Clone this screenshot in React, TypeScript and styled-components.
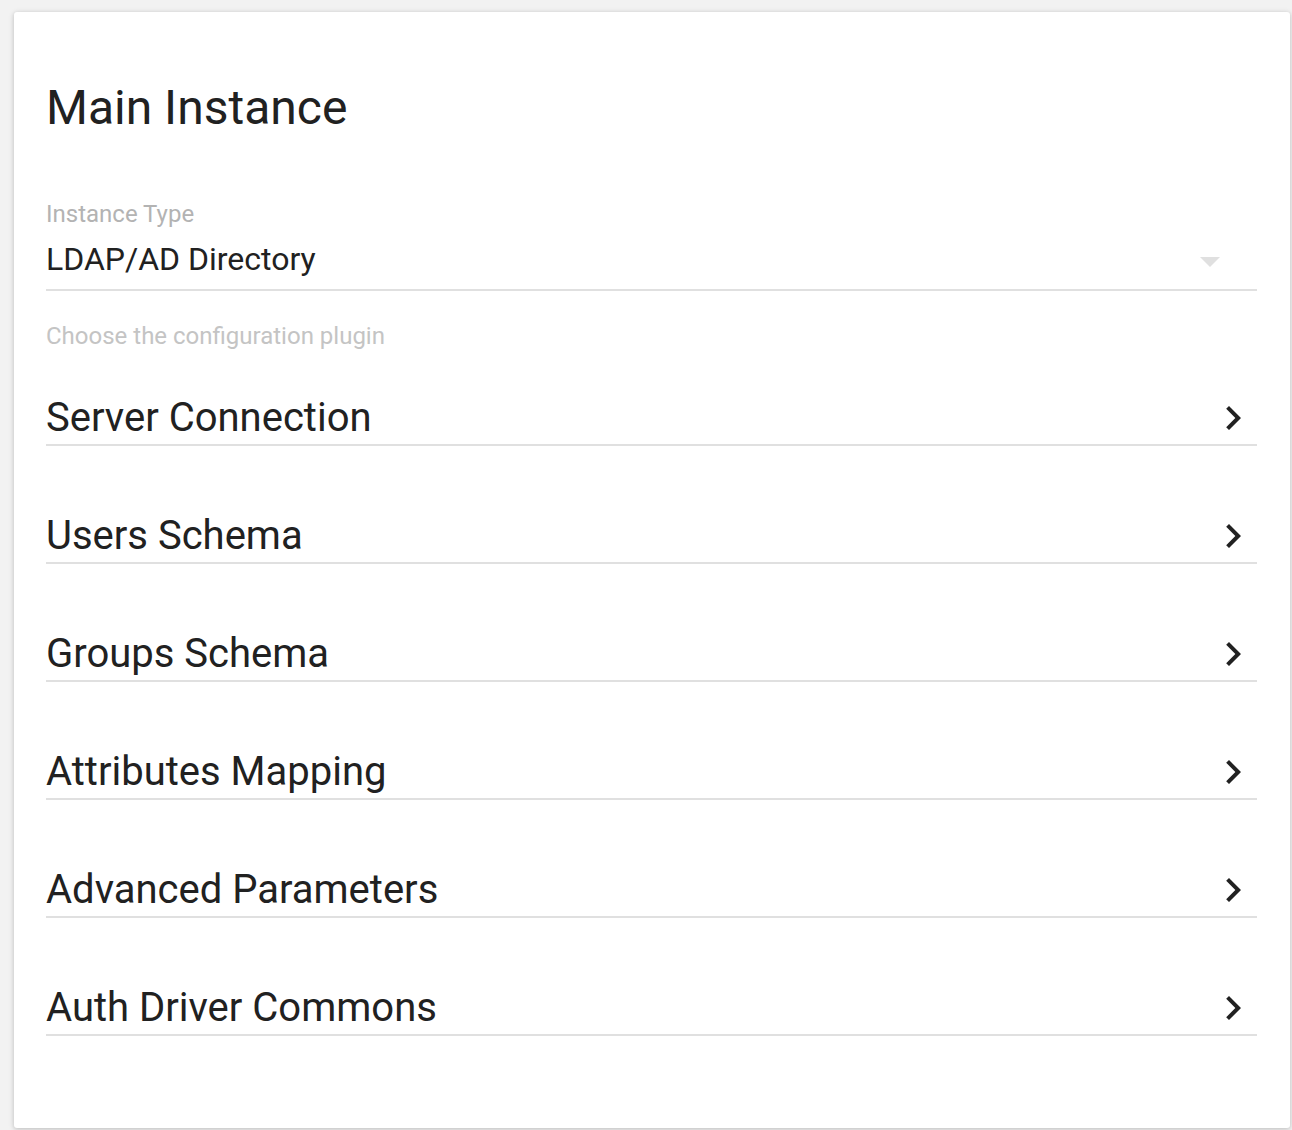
import React from "react";
import styled, { createGlobalStyle } from "styled-components";

const GlobalStyle = createGlobalStyle`
  html, body {
    margin: 0;
    padding: 0;
    background: #f2f2f2;
  }
  body {
    font-family: Roboto, "Liberation Sans", Arial, sans-serif;
    -webkit-font-smoothing: antialiased;
  }
`;

const Page = styled.div`
  padding: 12px 2px 2px 14px;
  min-height: 1130px;
  box-sizing: border-box;
`;

const Card = styled.section`
  background: #ffffff;
  border-radius: 3px;
  box-shadow: 0 1px 6px rgba(0, 0, 0, 0.12), 0 1px 4px rgba(0, 0, 0, 0.12);
  padding: 68px 33px 92px 32px;
  box-sizing: border-box;
  height: 1116px;
`;

const Title = styled.h1`
  margin: 0;
  font-size: 48px;
  line-height: 56px;
  font-weight: 400;
  color: #212121;
`;

const Field = styled.div`
  margin-top: 62px;
`;

const FieldLabel = styled.div`
  font-size: 24px;
  line-height: 32px;
  color: #b3b3b3;
`;

const SelectRow = styled.div`
  margin-top: 9px;
  display: flex;
  align-items: center;
  justify-content: space-between;
  padding-bottom: 10px;
  border-bottom: 2px solid #e0e0e0;
  height: 40px;
`;

const SelectValue = styled.div`
  font-size: 32px;
  line-height: 40px;
  color: #212121;
`;

const DropIcon = styled.svg`
  width: 48px;
  height: 48px;
  margin-right: 23px;
  margin-top: 4px;
  fill: #e0e0e0;
`;

const Helper = styled.div`
  margin-top: 29px;
  font-size: 24px;
  line-height: 32px;
  color: #c4c4c4;
`;

const List = styled.div`
  margin-top: 40px;
  display: flex;
  flex-direction: column;
  gap: 64px;
`;

const Row = styled.div`
  display: flex;
  align-items: center;
  justify-content: space-between;
  padding: 2px 0 2px;
  border-bottom: 2px solid #e0e0e0;
  cursor: pointer;
`;

const RowLabel = styled.div`
  font-size: 40px;
  line-height: 48px;
  color: #212121;
`;

const Chevron = styled.svg`
  width: 48px;
  height: 48px;
  fill: #212121;
  flex-shrink: 0;
`;

const sections = [
  "Server Connection",
  "Users Schema",
  "Groups Schema",
  "Attributes Mapping",
  "Advanced Parameters",
  "Auth Driver Commons",
];

export default function App() {
  return (
    <>
      <GlobalStyle />
      <Page>
        <Card>
          <Title>Main Instance</Title>
          <Field>
            <FieldLabel>Instance Type</FieldLabel>
            <SelectRow>
              <SelectValue>LDAP/AD Directory</SelectValue>
              <DropIcon viewBox="0 0 24 24">
                <path d="M7 10l5 5 5-5z" />
              </DropIcon>
            </SelectRow>
          </Field>
          <Helper>Choose the configuration plugin</Helper>
          <List>
            {sections.map((s) => (
              <Row key={s}>
                <RowLabel>{s}</RowLabel>
                <Chevron viewBox="0 0 24 24">
                  <path d="M10 6L8.59 7.41 13.17 12l-4.58 4.59L10 18l6-6z" />
                </Chevron>
              </Row>
            ))}
          </List>
        </Card>
      </Page>
    </>
  );
}
